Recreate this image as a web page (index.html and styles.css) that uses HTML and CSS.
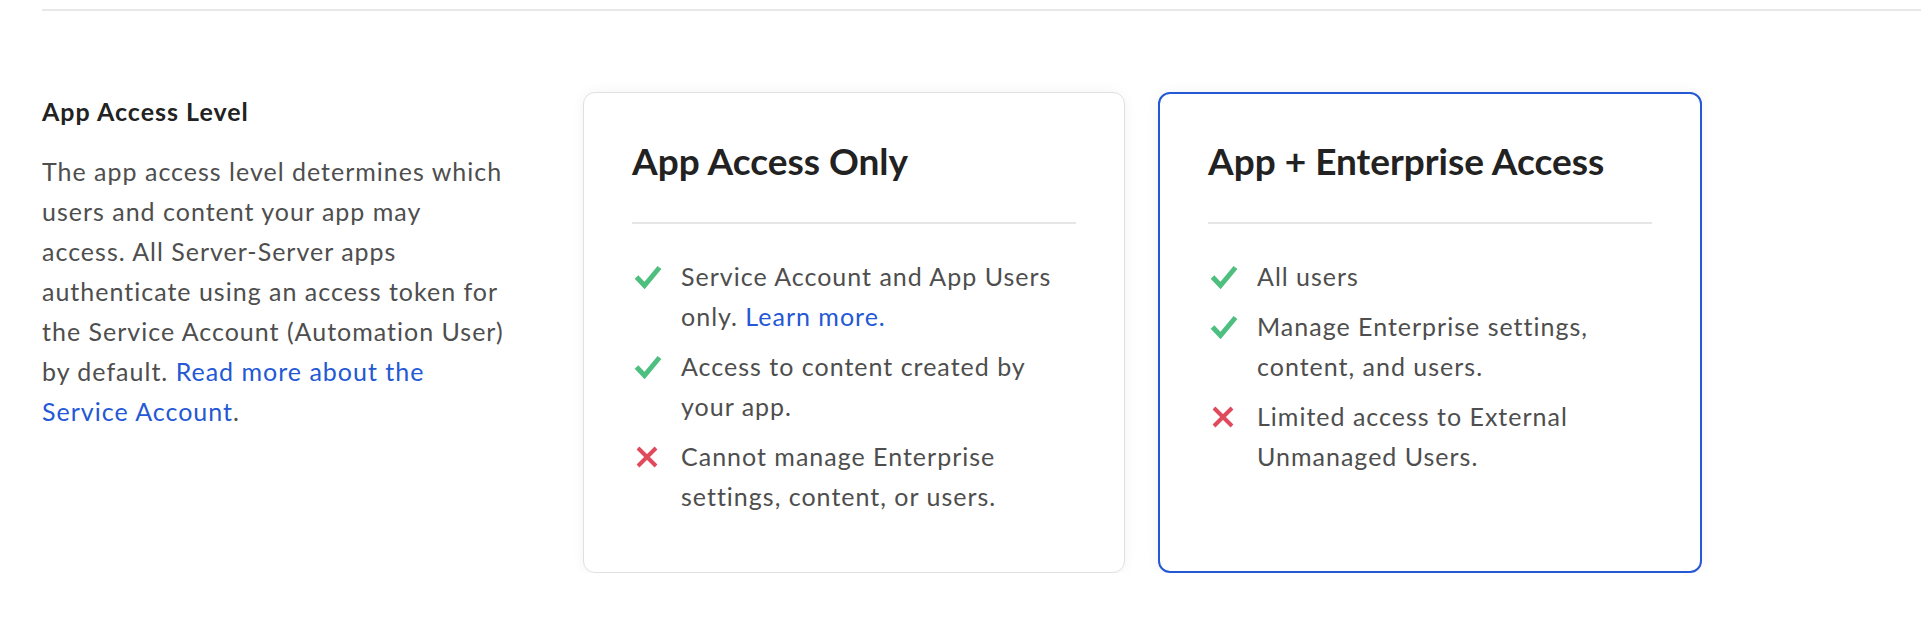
FILE: index.html
```html
<!DOCTYPE html>
<html lang="en">
<head>
    <meta charset="UTF-8">
    <meta name="viewport" content="width=device-width, initial-scale=1.0">
    <title>App Access Level</title>
    <link rel="stylesheet" href="styles.css">
</head>
<body>
    <div class="page">
        <div class="top-rule"></div>

        <div class="setting-row">
            <div class="setting-info">
                <h2>App Access Level</h2>
                <p>
                    The app access level determines which users and content your app may
                    access. All Server-Server apps authenticate using an access token for
                    the Service Account (Automation User) by default.
                    <a href="#">Read more about the Service Account</a>.
                </p>
            </div>

            <div class="access-options">
                <div class="access-card">
                    <h3>App Access Only</h3>
                    <ul class="feature-list">
                        <li>
                            <span class="icon"><svg class="check" viewBox="0 0 28 24"><polyline points="2.5,12 10.5,20.5 25.5,2.5"/></svg></span>
                            <span>Service Account and App Users only. <a href="#">Learn more.</a></span>
                        </li>
                        <li>
                            <span class="icon"><svg class="check" viewBox="0 0 28 24"><polyline points="2.5,12 10.5,20.5 25.5,2.5"/></svg></span>
                            <span>Access to content created by your app.</span>
                        </li>
                        <li>
                            <span class="icon"><svg class="cross" viewBox="0 0 22 22"><path d="M2 2 L20 20 M20 2 L2 20"/></svg></span>
                            <span>Cannot manage Enterprise settings, content, or users.</span>
                        </li>
                    </ul>
                </div>

                <div class="access-card selected">
                    <h3>App + Enterprise Access</h3>
                    <ul class="feature-list">
                        <li>
                            <span class="icon"><svg class="check" viewBox="0 0 28 24"><polyline points="2.5,12 10.5,20.5 25.5,2.5"/></svg></span>
                            <span>All users</span>
                        </li>
                        <li>
                            <span class="icon"><svg class="check" viewBox="0 0 28 24"><polyline points="2.5,12 10.5,20.5 25.5,2.5"/></svg></span>
                            <span>Manage Enterprise settings, content, and users.</span>
                        </li>
                        <li>
                            <span class="icon"><svg class="cross" viewBox="0 0 22 22"><path d="M2 2 L20 20 M20 2 L2 20"/></svg></span>
                            <span>Limited access to External Unmanaged Users.</span>
                        </li>
                    </ul>
                </div>
            </div>
        </div>
    </div>
</body>
</html>
```

FILE: styles.css
```css
body {
    margin: 0;
    font-family: 'Lato', 'Liberation Sans', sans-serif;
    color: #4e4e4e;
    background: #fff;
}
a {
    color: #2458d4;
    text-decoration: none;
}
.page {
    padding: 9px 0 0 42px;
}
.top-rule {
    height: 2px;
    background: #e8e8e8;
}
.setting-row {
    display: flex;
    align-items: flex-start;
    margin-top: 81px;
}
.setting-info {
    width: 464px;
    margin-right: 77px;
    padding-top: 4px;
}
.setting-info h2 {
    margin: 0 0 25px;
    font-size: 25px;
    line-height: 30px;
    font-weight: 700;
    letter-spacing: 1px;
    color: #222;
}
.setting-info p {
    margin: 0;
    font-size: 25px;
    line-height: 40px;
    letter-spacing: 1px;
}
.access-options {
    display: flex;
    gap: 33px;
}
.access-card {
    box-sizing: border-box;
    width: 542px;
    padding: 45px 48px 46px;
    border: 1px solid #e0e0e0;
    border-radius: 12px;
    background: #fff;
    box-shadow: 0 0 14px rgba(0, 0, 0, 0.05);
}
.access-card.selected {
    width: 544px;
    border: 2px solid #2458d4;
    padding-top: 44px;
}
.access-card h3 {
    margin: 0;
    padding-bottom: 38px;
    border-bottom: 2px solid #e6e6e6;
    font-size: 37px;
    line-height: 45.6px;
    font-weight: 700;
    color: #222;
}
.feature-list {
    list-style: none;
    margin: 32px 0 0;
    padding: 0;
}
.feature-list li {
    display: flex;
    margin-bottom: 10px;
    font-size: 25px;
    line-height: 40px;
    letter-spacing: 1px;
}
.icon {
    flex: none;
    width: 49px;
}
.icon svg {
    display: block;
    fill: none;
}
.check {
    width: 28px;
    height: 24px;
    margin: 9px 0 0 2px;
    stroke: #4fbf80;
    stroke-width: 5;
}
.cross {
    width: 22px;
    height: 22px;
    margin: 10px 0 0 4px;
    stroke: #df4a5c;
    stroke-width: 4;
}
```
